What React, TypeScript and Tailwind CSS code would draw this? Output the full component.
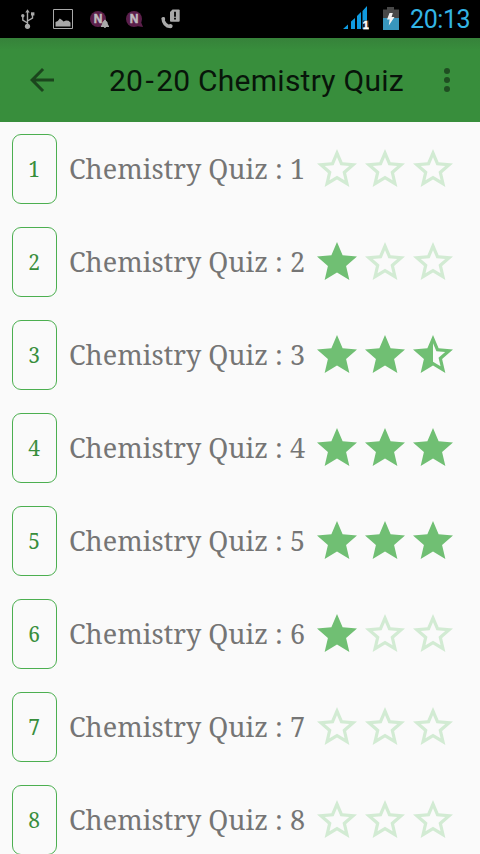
type Fill = 0 | 0.5 | 1;

const quizzes: { id: number; stars: Fill[] }[] = [
  { id: 1, stars: [0, 0, 0] },
  { id: 2, stars: [1, 0, 0] },
  { id: 3, stars: [1, 1, 0.5] },
  { id: 4, stars: [1, 1, 1] },
  { id: 5, stars: [1, 1, 1] },
  { id: 6, stars: [1, 0, 0] },
  { id: 7, stars: [0, 0, 0] },
  { id: 8, stars: [0, 0, 0] },
];

const FULL = "M12 17.27L18.18 21l-1.64-7.03L22 9.24l-7.19-.61L12 2 9.19 8.63 2 9.24l5.46 4.73L5.82 21z";
const EMPTY =
  "M22 9.24l-7.19-.62L12 2 9.19 8.63 2 9.24l5.46 4.73L5.82 21 12 17.27 18.18 21l-1.63-7.03L22 9.24zM12 15.4l-3.76 2.27 1-4.28-3.32-2.88 4.38-.38L12 6.1l1.71 4.04 4.38.38-3.32 2.88 1 4.28L12 15.4z";
const HALF =
  "M22 9.24l-7.19-.62L12 2 9.19 8.63 2 9.24l5.46 4.73L5.82 21 12 17.27 18.18 21l-1.63-7.03L22 9.24zM12 15.4V6.1l1.71 4.04 4.38.38-3.32 2.88 1 4.28L12 15.4z";

function Star({ fill }: { fill: Fill }) {
  const d = fill === 1 ? FULL : fill === 0.5 ? HALF : EMPTY;
  return (
    <svg viewBox="0 0 24 24" className={`size-12 ${fill ? "text-[#70bf73]" : "text-[#d2ebd3]"}`}>
      <path d={d} fill="currentColor" />
    </svg>
  );
}

function UsbIcon() {
  return (
    <svg width="14" height="20" viewBox="0 0 14 20" fill="none" stroke="#a9a9a9" strokeWidth="1.4">
      <path d="M6.5 3V17M6.5 14L1.8 11V7M6.5 12L11.5 9V5.5" />
      <path d="M4.3 3.6L6.5.3l2.2 3.3z" fill="#a9a9a9" stroke="none" />
      <circle cx="1.8" cy="6.8" r="1.7" fill="#a9a9a9" stroke="none" />
      <path d="M10 3.3h3.4v3.2H10z" fill="#a9a9a9" stroke="none" />
      <circle cx="6.5" cy="17.3" r="2.6" fill="#a9a9a9" stroke="none" />
    </svg>
  );
}

function PictureIcon() {
  return (
    <svg width="20" height="20" viewBox="0 0 20 20">
      <path d="M.5.5h19v19H.5z" fill="none" stroke="#a9a9a9" />
      <path d="M2.5 17.5v-4.500l2.300-1L6.800 9.500 9 11l1.500 1.500L13 11.500l2.500.2 2 1.800V17.500z" fill="#a9a9a9" />
    </svg>
  );
}

function NBadge({ bell = false }: { bell?: boolean }) {
  return (
    <svg width="20" height="18" viewBox="0 0 20 18">
      <circle cx="8" cy="8" r="8" fill="#5b1f4a" />
      {!bell && <path d="M10 15l7 1-2-5z" fill="#5b1f4a" />}
      <text
        x="8"
        y="12"
        textAnchor="middle"
        fill="#c0bcbf"
        stroke="#c0bcbf"
        strokeWidth=".5"
        className="font-['Liberation_Sans'] text-[12px] font-bold"
      >
        N
      </text>
      {bell && (
        <path
          d="M15 8.800c.7 0 1 .4 1 .9 1.500.7 1.800 2.200 1.800 3.400l1.200 2.200v.8h-2.900a1.200 1.200 0 0 1-2.300 0h-2.900v-.8l1.200-2.200c0-1.200.3-2.700 1.900-3.400 0-.5.3-.9 1-.9z"
          fill="#a9a9a9"
        />
      )}
    </svg>
  );
}

function SimCallIcon() {
  return (
    <svg width="20" height="20" viewBox="0 0 20 20">
      <path
        d="M.3 9.200Q1 7.800 3 8q1 .2 1.200 2l-.3 1.500q1.300 2.800 3.700 4l2-.6q2.200.4 2.100 2.200-.2 2.200-2.400 2.200Q1 18.500.3 9.200z"
        fill="#a9a9a9"
      />
      <path d="M11.500.5h6.200q1 0 1 1v10.200q0 1-1 1H10q-1 0-1-1V3z" fill="#a9a9a9" />
      <path d="M13 2.700h2v5h-2zM13 8.800h2v1.800h-2z" fill="#111" />
    </svg>
  );
}

function SignalIcon() {
  return (
    <svg width="26" height="24" viewBox="0 0 26 24">
      <path d="M0 23l5-4.600V23zM8 23v-7.500L12 12v11zM14 23V10l4-4v17zM19.500 23V5L24 0v23z" fill="#109be0" />
      <path d="M20 14.500h6V24h-6z" fill="#222" />
      <text
        x="22.800"
        y="23"
        textAnchor="middle"
        fill="#fff"
        stroke="#fff"
        strokeWidth=".5"
        className="font-['Liberation_Sans'] text-[11px] font-bold"
      >
        1
      </text>
    </svg>
  );
}

function BatteryIcon() {
  return (
    <svg width="16" height="23" viewBox="0 0 16 23">
      <path d="M0 2.500h4V0h7v2.500h5V12H0z" fill="#484848" />
      <path d="M0 11h16v12H0z" fill="#3896bd" />
      <path d="M6.500 6H9.800L8.600 10H11.500L5.800 18.500l.8-6H4z" fill="#f2f2f2" />
    </svg>
  );
}

function StatusBar() {
  return (
    <div className="flex h-[38px] items-start bg-black">
      <div className="flex items-start pt-[9px] pl-[21px]">
        <UsbIcon />
        <div className="ml-[18px]"><PictureIcon /></div>
        <div className="mt-0.5 ml-[17px]"><NBadge bell /></div>
        <div className="mt-0.5 ml-4"><NBadge /></div>
        <div className="ml-[15px]"><SimCallIcon /></div>
      </div>
      <div className="ml-auto flex items-start pr-[9px]">
        <div className="mt-1.5"><SignalIcon /></div>
        <div className="mt-[7px] ml-3.5"><BatteryIcon /></div>
        <span className="mt-1 ml-2.5 w-[62px] pl-px text-[25px] leading-8 tracking-[-0.4px] whitespace-nowrap text-[#33b5e5]">
          20:13
        </span>
      </div>
    </div>
  );
}

function AppBar() {
  return (
    <header className="flex h-[84px] items-center bg-[#388e3c] bg-linear-to-b from-[#36823a] to-[#388e3c] to-15%">
      <svg width="36" height="36" viewBox="0 0 24 24" className="ml-6" fill="#1b451d">
        <path d="M20 11H7.830l5.590-5.590L12 4l-8 8 8 8 1.410-1.410L7.830 13H20v-2z" />
      </svg>
      <h1 className="ml-[49px] w-[299px] pt-0.5 text-[30px] leading-10 tracking-[0.25px] whitespace-nowrap text-[#08150a]">
        20<span className="px-[2.2px]">-</span>20 Chemistry Quiz
      </h1>
      <svg width="6" height="24" viewBox="0 0 6 24" className="ml-9" fill="#1f4d22">
        <circle cx="3" cy="3" r="3" />
        <circle cx="3" cy="12" r="3" />
        <circle cx="3" cy="21" r="3" />
      </svg>
    </header>
  );
}

export default function App() {
  return (
    <div className="h-[854px] w-[480px] overflow-hidden bg-[#fafafa] font-['Roboto',sans-serif]">
      <StatusBar />
      <AppBar />
      <main className="font-['Noto_Serif','DejaVu_Serif_Condensed','DejaVu_Serif',serif]">
        {quizzes.map(({ id, stars }) => (
          <div key={id} className="flex h-[93px] items-start pt-3 pl-3">
            <div className="h-[70px] w-[45px] shrink-0 rounded-[9px] border border-[#4caf50] pr-px text-center text-[21px] leading-[68px] text-[#388e3c]">
              {id}
            </div>
            <div className="ml-3 h-[70px] w-[244px] text-[27px] leading-[70px] tracking-[0.03px] whitespace-nowrap text-[#757575]">
              {`Chemistry Quiz : ${id}`}
            </div>
            <div className="flex h-[70px] items-center">
              {stars.map((fill, i) => (
                <Star key={i} fill={fill} />
              ))}
            </div>
          </div>
        ))}
      </main>
    </div>
  );
}
